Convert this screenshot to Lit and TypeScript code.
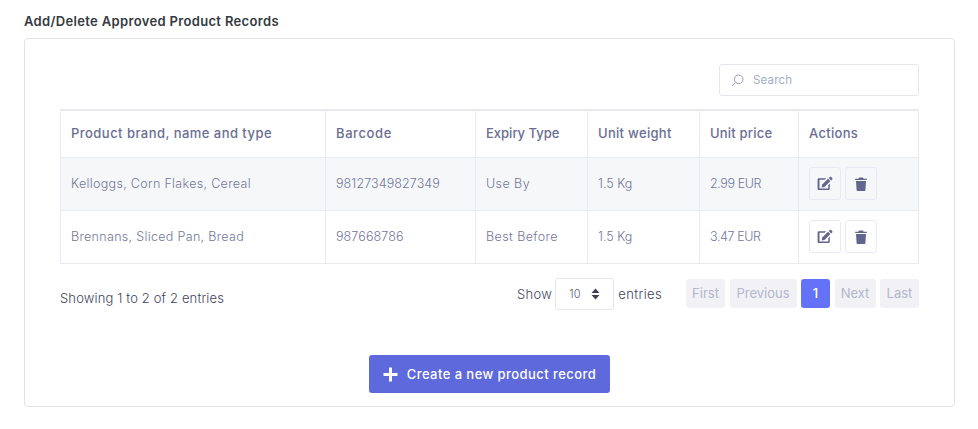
import { LitElement, html, css } from "lit";
import { customElement } from "lit/decorators.js";

const rows = [
  ["Kelloggs, Corn Flakes, Cereal", "98127349827349", "Use By", "1.5 Kg", "2.99 EUR"],
  ["Brennans, Sliced Pan, Bread", "987668786", "Best Before", "1.5 Kg", "3.47 EUR"],
];
const heads = ["Product brand, name and type", "Barcode", "Expiry Type", "Unit weight", "Unit price", "Actions"];

@customElement("app-root")
export class AppRoot extends LitElement {
  static styles = css`
    :host { display: block; font-family: "Inter", "Liberation Sans", sans-serif; color: #6c6f93; background: #fff; height: 429px; overflow: hidden; }
    * { box-sizing: border-box; }
    .page { padding: 13px 23px 0 24px; }
    h1 { margin: 0 0 9px; font-size: 13px; line-height: 16px; font-weight: 600; color: #343a40; letter-spacing: .34px; }
    .card { height: 369px; border: 1px solid #e2e2ea; border-radius: 4px; padding: 25px 35px 13px; display: flex; flex-direction: column; }
    .top { display: flex; justify-content: flex-end; margin-bottom: 13px; }
    .search { width: 200px; height: 32px; border: 1px solid #e6e6f0; border-radius: 3px; display: flex; align-items: center; gap: 9px; padding-left: 11px; font-size: 11.5px; letter-spacing: .2px; color: #a8aac8; }
    table { border-collapse: collapse; table-layout: fixed; width: 858px; border-top: 2px solid #e8e8f0; }
    th, td { border: 1px solid #e9e9f1; padding: 0 10px; text-align: left; white-space: nowrap; overflow: hidden; }
    th { height: 47px; padding-bottom: 2px; font-size: 13px; font-weight: 500; color: #6a6e92; }
    td { height: 53px; font-size: 12.5px; font-weight: 300; color: #73779b; }
    th:nth-child(1) { letter-spacing: .46px; }
    th:nth-child(2) { letter-spacing: .6px; }
    th:nth-child(4) { letter-spacing: .3px; }
    th:nth-child(5) { letter-spacing: .2px; }
    th:nth-child(6) { letter-spacing: .3px; }
    td:nth-child(1) { letter-spacing: .32px; }
    td:nth-child(2) { letter-spacing: .1px; }
    td:nth-child(3) { letter-spacing: .42px; }
    td:nth-child(5) { letter-spacing: -.4px; }
    tbody tr:first-child td { background: #f6f7f9; }
    .acts { display: flex; gap: 4px; }
    .ib { width: 32px; height: 33px; border: 1px solid #e9e9f6; border-radius: 3px; display: flex; align-items: center; justify-content: center; background: transparent; }
    .foot { display: flex; align-items: flex-start; margin-top: 14px; }
    .info { margin-top: 12px; font-size: 13px; line-height: 16px; font-weight: 300; color: #3f445e; letter-spacing: .14px; }
    .len { margin-left: auto; display: flex; align-items: center; gap: 3px; font-size: 13px; font-weight: 300; letter-spacing: .36px; color: #3f445e; }
    .sel { width: 59px; height: 32px; margin-right: 1px; border: 1px solid #e6e6f0; border-radius: 3px; display: flex; align-items: center; justify-content: space-between; padding: 0 13px 0 13px; font-size: 11px; letter-spacing: 0; color: #555a75; }
    .pages { display: flex; gap: 4.5px; margin: 1px 0 0 24px; }
    .p { height: 29px; padding: 0 3px; border-radius: 3px; background: #f1f1f6; color: #b4b6cc; font-size: 13px; display: flex; align-items: center; justify-content: center; }
    .p.on { background: #6372f7; color: #fff; font-weight: 500; }
    .w39 { width: 39px; } .w67 { width: 67px; } .w29 { width: 29px; } .w41 { width: 41px; }
    .c1 { width: 265px; } .c2 { width: 150px; } .c3 { width: 112px; } .c4 { width: 112px; } .c5 { width: 99px; } .c6 { width: 120px; }
    .cta { margin: auto auto 0; width: 241px; height: 38px; border: 0; border-radius: 3px; background: #5e69dc; color: #fff; font: 500 13px "Inter", "Liberation Sans", sans-serif; letter-spacing: .44px; display: flex; align-items: center; justify-content: center; gap: 9px; }
  `;

  private edit() {
    return html`<svg width="16" height="15" viewBox="0 0 16 15" fill="#62668f"><path d="M1.8 2.2h7.4L7.7 3.7H2.5v8.8h8.8V9l1.5-1.5v5.2c0 .5-.4 1.300-1.300 1.300H1.800C.9 14 .6 13.300.6 12.700V3.500c0-.6.5-1.300 1.200-1.300z"/><path d="M5.200 8.600l5.900-5.900 2.300 2.300-5.900 5.900-2.800.5z"/><path d="M11.800 2l1-1c.4-.4 1-.4 1.400 0l1 1c.4.4.4 1 0 1.400l-1 1z"/></svg>`;
  }
  private trash() {
    return html`<svg width="12" height="14" viewBox="0 0 12 14" fill="#62668f"><path d="M.2 1.700h3.200L4 .5h4l.6 1.200h3.200v1.400H.2z"/><path d="M1 4h10l-.6 9c0 .6-.5 1-1 1H2.600c-.5 0-1-.4-1-1z"/></svg>`;
  }

  render() {
    return html`<div class="page">
      <h1>Add/Delete Approved Product Records</h1>
      <div class="card">
        <div class="top"><div class="search">
          <svg width="13" height="13" viewBox="0 0 13 13" fill="none" stroke="#9a9cbc" stroke-width="1"><circle cx="7.700" cy="5.300" r="4.300"/><path d="M4.600 8.400L1 12"/></svg>
          <span>Search</span>
        </div></div>
        <table>
          <colgroup><col class="c1"/><col class="c2"/><col class="c3"/><col class="c4"/><col class="c5"/><col class="c6"/></colgroup>
          <thead><tr>${heads.map((h) => html`<th>${h}</th>`)}</tr></thead>
          <tbody>${rows.map((r) => html`<tr>${r.map((c) => html`<td>${c}</td>`)}<td><div class="acts"><div class="ib">${this.edit()}</div><div class="ib">${this.trash()}</div></div></td></tr>`)}</tbody>
        </table>
        <div class="foot">
          <div class="info">Showing 1 to 2 of 2 entries</div>
          <div class="len"><span>Show</span><div class="sel"><span>10</span>
            <svg width="9" height="12" viewBox="0 0 9 12" fill="#3d3f55"><path d="M4.500 .5L8.500 5H.5zM4.500 11.500L.5 7h8z"/></svg></div><span>entries</span></div>
          <div class="pages"><div class="p w39">First</div><div class="p w67">Previous</div><div class="p on w29">1</div><div class="p w41">Next</div><div class="p w39">Last</div></div>
        </div>
        <button class="cta"><svg width="15" height="15" viewBox="0 0 15 15" fill="#fff"><path d="M6 .5h3V6h5.500v3H9v5.500H6V9H.5V6H6z"/></svg><span>Create a new product record</span></button>
      </div>
    </div>`;
  }
}
